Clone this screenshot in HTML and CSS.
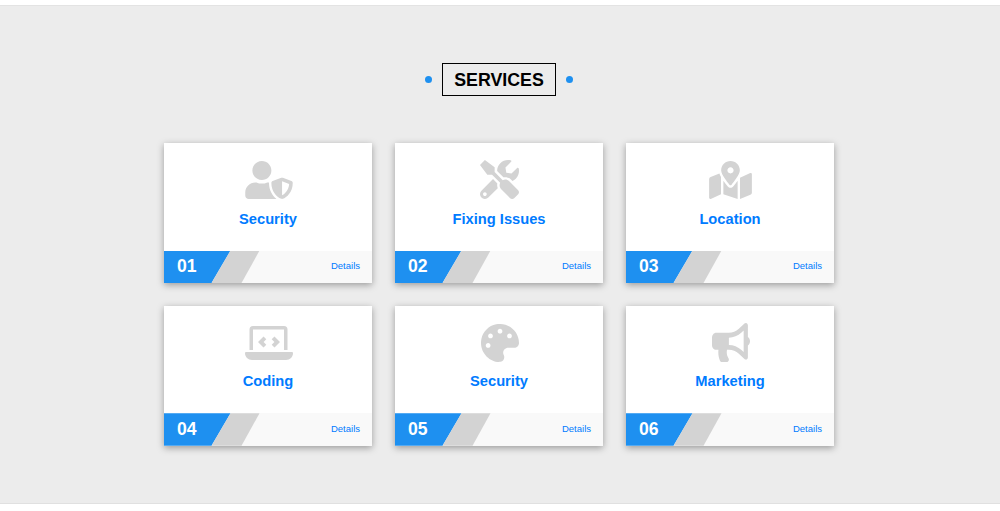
FILE: index.html
```html
<!DOCTYPE html>
<html lang="en">
<head>
<meta charset="utf-8">
<title>Services</title>
<link rel="stylesheet" href="styles.css">
</head>
<body>
<section class="services">
  <header class="heading">
    <span class="dot"></span>
    <h2 class="heading-title">SERVICES</h2>
    <span class="dot"></span>
  </header>
  <div class="grid">
    <article class="card">
      <div class="card-body">
        <div class="icon-slot"><svg class="icon" width="48" height="38" viewBox="0 0 640 512"><path d="M622.3 271.1l-115.2-45c-4.1-1.6-12.6-3.7-22.2 0l-115.2 45c-10.7 4.2-17.7 14-17.7 24.9 0 111.6 68.7 188.8 132.9 213.9 9.6 3.7 18 1.6 22.2 0C558.4 489.9 640 420.5 640 296c0-10.9-7-20.7-17.7-24.9zM496 462.4V273.3l95.5 37.3c-5.6 87.1-60.9 135.4-95.5 151.8zM224 256c70.7 0 128-57.3 128-128S294.7 0 224 0 96 57.3 96 128s57.3 128 128 128zm96 40c0-2.5.8-4.8 1.1-7.2-2.5-.1-4.9-.8-7.5-.8h-16.7c-22.2 10.2-46.9 16-72.9 16s-50.6-5.8-72.9-16h-16.7C60.2 288 0 348.2 0 422.4V464c0 26.5 21.5 48 48 48h352c6.8 0 13.3-1.5 19.2-4-54-42.9-99.2-116.7-99.2-212z"/></svg></div>
        <h3 class="card-title">Security</h3>
      </div>
      <div class="card-foot"><span class="num">01</span><span class="stripe"></span><a class="details" href="#">Details</a></div>
    </article>
    <article class="card">
      <div class="card-body">
        <div class="icon-slot"><svg class="icon" width="39" height="39" viewBox="0 0 512 512"><path d="M501.1 395.7L384 278.6c-23.1-23.1-57.6-27.6-85.4-13.9L192 158.1V96L64 0 0 64l96 128h62.1l106.6 106.6c-13.6 27.8-9.2 62.3 13.9 85.4l117.1 117.1c14.6 14.6 38.2 14.6 52.7 0l52.7-52.7c14.5-14.6 14.5-38.2 0-52.7zM331.7 225c28.3 0 54.9 11 74.9 31l19.4 19.4c15.8-6.9 30.8-16.5 43.8-29.5 37.1-37.1 49.7-89.3 37.9-136.7-2.2-9-13.5-12.1-20.1-5.5l-74.4 74.4-67.9-11.3L334 98.9l74.4-74.4c6.6-6.6 3.4-17.9-5.7-20.2-47.4-11.7-99.6.9-136.6 37.9-28.5 28.5-41.9 66.1-41.2 103.6l82.1 82.1c8.1-1.9 16.5-2.9 24.7-2.9zm-103.9 82l-56.7-56.7L18.7 402.8c-25 25-25 65.5 0 90.5s65.5 25 90.5 0l123.6-123.6c-7.6-19.9-9.9-41.6-5-62.7zM64 472c-13.2 0-24-10.8-24-24 0-13.3 10.7-24 24-24s24 10.7 24 24c0 13.2-10.7 24-24 24z"/></svg></div>
        <h3 class="card-title">Fixing Issues</h3>
      </div>
      <div class="card-foot"><span class="num">02</span><span class="stripe"></span><a class="details" href="#">Details</a></div>
    </article>
    <article class="card">
      <div class="card-body">
        <div class="icon-slot"><svg class="icon" width="43" height="38" viewBox="0 0 576 512"><path d="M288 0c-69.59 0-126 56.41-126 126 0 56.26 82.35 158.8 113.9 196.02 6.39 7.54 17.82 7.54 24.2 0C331.65 284.8 414 182.26 414 126 414 56.41 357.59 0 288 0zm0 168c-23.2 0-42-18.8-42-42s18.8-42 42-42 42 18.8 42 42-18.8 42-42 42zM20.12 215.95A32.006 32.006 0 0 0 0 245.66v250.32c0 11.32 11.43 19.06 21.94 14.86L160 448V214.92c-8.84-15.98-16.07-31.54-21.25-46.42L20.12 215.95zM288 359.67c-14.07 0-27.38-6.18-36.51-16.96-19.66-23.2-40.57-49.62-59.49-76.72V448l192 64V265.99c-18.92 27.09-39.82 53.52-59.49 76.72-9.13 10.77-22.44 16.96-36.51 16.96zm266.06-198.51L416 224v288l139.88-55.95A31.996 31.996 0 0 0 576 426.34V176.02c0-11.32-11.43-19.06-21.94-14.86z"/></svg></div>
        <h3 class="card-title">Location</h3>
      </div>
      <div class="card-foot"><span class="num">03</span><span class="stripe"></span><a class="details" href="#">Details</a></div>
    </article>
    <article class="card">
      <div class="card-body">
        <div class="icon-slot"><svg class="icon" width="48" height="34" viewBox="0 0 48 34"><path fill-rule="evenodd" d="M8 0h31a3.500 3.500 0 0 1 3.500 3.500V24H39V3.500H8V24H4.500V3.500A3.500 3.500 0 0 1 8 0z"/><path d="M1 26h46a1 1 0 0 1 1 1c0 3.900-3 7-7 7H7c-4 0-7-3.100-7-7a1 1 0 0 1 1-1z"/><path d="M18.500 10.500l2.800 2.800-2.700 2.700 2.700 2.700-2.800 2.800-5.500-5.500zM29.500 10.500l-2.800 2.800 2.700 2.700-2.700 2.700 2.800 2.800 5.500-5.500z"/></svg></div>
        <h3 class="card-title">Coding</h3>
      </div>
      <div class="card-foot"><span class="num">04</span><span class="stripe"></span><a class="details" href="#">Details</a></div>
    </article>
    <article class="card">
      <div class="card-body">
        <div class="icon-slot"><svg class="icon" width="38" height="38" viewBox="0 0 512 512"><path d="M204.3 5C104.9 24.4 24.8 104.3 5.2 203.4c-37 187 131.7 326.4 258.8 306.7 41.2-6.4 61.4-54.6 42.5-91.7-23.1-45.4 9.9-98.4 60.9-98.4h79.7c35.8 0 64.8-29.6 64.9-65.3C511.5 97.1 368.1-26.9 204.3 5zM96 320c-17.7 0-32-14.3-32-32s14.3-32 32-32 32 14.3 32 32-14.3 32-32 32zm32-128c-17.7 0-32-14.3-32-32s14.3-32 32-32 32 14.3 32 32-14.3 32-32 32zm128-64c-17.7 0-32-14.3-32-32s14.3-32 32-32 32 14.3 32 32-14.3 32-32 32zm128 64c-17.7 0-32-14.3-32-32s14.3-32 32-32 32 14.3 32 32-14.3 32-32 32z"/></svg></div>
        <h3 class="card-title">Security</h3>
      </div>
      <div class="card-foot"><span class="num">05</span><span class="stripe"></span><a class="details" href="#">Details</a></div>
    </article>
    <article class="card">
      <div class="card-body">
        <div class="icon-slot"><svg class="icon" width="38" height="39" viewBox="0 0 576 512" preserveAspectRatio="none"><path d="M576 240c0-23.63-12.95-44.04-32-55.12V32.01C544 23.26 537.02 0 512 0c-7.12 0-14.19 2.38-19.98 7.02l-85.03 68.03C364.28 109.19 310.66 128 256 128H64c-35.35 0-64 28.65-64 64v96c0 35.35 28.65 64 64 64h33.7c-1.39 10.48-2.18 21.14-2.18 32 0 39.77 9.26 77.35 25.56 110.94 5.19 10.69 16.52 17.06 28.4 17.06h74.28c26.05 0 41.69-29.84 25.9-50.56-16.4-21.52-26.15-48.36-26.15-77.44 0-11.11 1.62-21.79 4.41-32H256c54.66 0 108.28 18.81 150.98 52.95l85.03 68.03a32.023 32.023 0 0 0 19.98 7.02c24.92 0 32-22.78 32-32V295.13C563.05 284.04 576 263.63 576 240zm-96 141.42l-33.05-26.44C392.95 311.78 325.12 288 256 288v-96c69.12 0 136.95-23.78 190.95-66.98L480 98.58v282.84z"/></svg></div>
        <h3 class="card-title">Marketing</h3>
      </div>
      <div class="card-foot"><span class="num">06</span><span class="stripe"></span><a class="details" href="#">Details</a></div>
    </article>
  </div>
</section>
</body>
</html>
```
FILE: styles.css
```css
* { box-sizing: border-box; }
html, body { margin: 0; background: #fff; }
body { padding-top: 5px; font-family: "Liberation Sans", Arial, sans-serif; }

.services {
  height: 499px;
  padding: 57px 2px 0 0;
  background: #ececec;
  border-top: 1px solid #e3e3e3;
  border-bottom: 1px solid #e0e0e0;
}

.heading {
  display: flex;
  justify-content: center;
  align-items: center;
  gap: 10px;
  margin-bottom: 46.9px;
  height: 33px;
}
.dot {
  width: 7px;
  height: 7px;
  border-radius: 50%;
  background: #1e90f0;
}
.heading-title {
  margin: 0;
  width: 114px;
  height: 33px;
  border: 1px solid #000;
  color: #000;
  font-size: 17.8px;
  font-weight: 700;
  line-height: 32px;
  text-align: center;
}

.grid {
  display: grid;
  grid-template-columns: repeat(3, 208px);
  justify-content: center;
  column-gap: 23px;
  row-gap: 22.5px;
}
.card {
  background: #fff;
  box-shadow: 0 2px 7px rgba(0, 0, 0, .35);
}
.card-body {
  height: 107.7px;
  padding-top: 17px;
  text-align: center;
}
.icon-slot {
  display: flex;
  justify-content: center;
  align-items: center;
  height: 40px;
  padding-left: 1px;
}
.icon { display: block; fill: #d3d3d3; }
.card-title {
  margin: 9.7px 0 0;
  color: #007bff;
  font-size: 14.7px;
  font-weight: 700;
  line-height: 18px;
}
.card-foot {
  display: flex;
  align-items: center;
  height: 32.5px;
  background: #f9f9f9;
}
.num {
  width: 66.5px;
  height: 100%;
  padding: .3px 0 0 13px;
  background: #1e90f0;
  color: #fff;
  font-size: 17.6px;
  font-weight: 700;
  line-height: 31px;
  clip-path: polygon(0 0, 100% 0, 47.5px 100%, 0 100%);
}
.stripe {
  width: 48px;
  height: 100%;
  margin-left: -19px;
  background: #d3d3d3;
  clip-path: polygon(19px 0, 100% 0, 30px 100%, 0 100%);
}
.details {
  margin: 0 0 2px auto;
  padding-right: 12px;
  color: #007bff;
  font-size: 9.5px;
  text-decoration: none;
}
```
